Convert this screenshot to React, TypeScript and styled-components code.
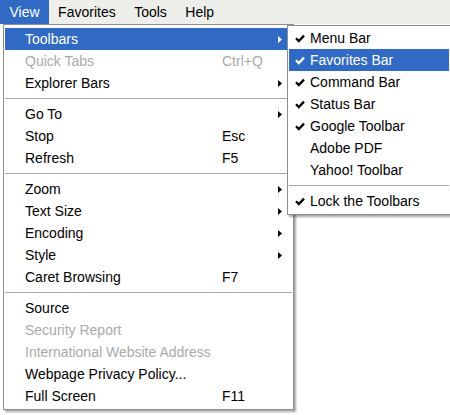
import styled, { createGlobalStyle } from 'styled-components'

const GlobalStyle = createGlobalStyle`
body {
  margin: 0;
  background: #ffffff;
  font-family: "Liberation Sans", Arial, sans-serif;
}
`

type Entry =
  | { sep: true }
  | { label: string; key?: string; sub?: boolean; off?: boolean; hot?: boolean; check?: boolean; sep?: false }

const viewItems: Entry[] = [
  { label: 'Toolbars', sub: true, hot: true },
  { label: 'Quick Tabs', key: 'Ctrl+Q', off: true },
  { label: 'Explorer Bars', sub: true },
  { sep: true },
  { label: 'Go To', sub: true },
  { label: 'Stop', key: 'Esc' },
  { label: 'Refresh', key: 'F5' },
  { sep: true },
  { label: 'Zoom', sub: true },
  { label: 'Text Size', sub: true },
  { label: 'Encoding', sub: true },
  { label: 'Style', sub: true },
  { label: 'Caret Browsing', key: 'F7' },
  { sep: true },
  { label: 'Source' },
  { label: 'Security Report', off: true },
  { label: 'International Website Address', off: true },
  { label: 'Webpage Privacy Policy...' },
  { label: 'Full Screen', key: 'F11' },
]

const toolbarItems: Entry[] = [
  { label: 'Menu Bar', check: true },
  { label: 'Favorites Bar', check: true, hot: true },
  { label: 'Command Bar', check: true },
  { label: 'Status Bar', check: true },
  { label: 'Google Toolbar', check: true },
  { label: 'Adobe PDF' },
  { label: 'Yahoo! Toolbar' },
  { sep: true },
  { label: 'Lock the Toolbars', check: true },
]

const Check = () => (
  <svg width="10" height="9" viewBox="0 0 10 9">
    <path d="M1 4.2 L3.8 7 L9 1.6" fill="none" stroke="currentColor" strokeWidth="2.3" />
  </svg>
)

const Arrow = () => (
  <svg width="4" height="7" viewBox="0 0 4 7">
    <polygon points="0,0 4,3.5 0,7" fill="currentColor" />
  </svg>
)

const App = () => {
  return (
    <Page>
      <GlobalStyle />
      <MenuBar>
        <Title $open>View</Title>
        <Title>Favorites</Title>
        <Title>Tools</Title>
        <Title>Help</Title>
      </MenuBar>

      <Menu>
        {viewItems.map((it, i) =>
          it.sep ? (
            <Sep key={i} />
          ) : (
            <Item key={i} $hot={it.hot} $off={it.off}>
              <span />
              <Label>{it.label}</Label>
              <Key>{it.key}</Key>
              <ArrowCell>{it.sub && <Arrow />}</ArrowCell>
            </Item>
          )
        )}
      </Menu>

      <SubMenu>
        {toolbarItems.map((it, i) =>
          it.sep ? (
            <SubSep key={i} />
          ) : (
            <SubItem key={i} $hot={it.hot}>
              <CheckCell>{it.check && <Check />}</CheckCell>
              <Label>{it.label}</Label>
            </SubItem>
          )
        )}
      </SubMenu>
    </Page>
  )
}

export default App

const Page = styled.div`
position: relative;
width: 450px;
height: 415px;
overflow: hidden;
background: #ffffff;
`

const MenuBar = styled.div`
display: flex;
align-items: stretch;
height: 24px;
background: #eeeeea;
font-size: 14px;
color: #000;
`

const Title = styled.div<{ $open?: boolean }>`
display: flex;
align-items: center;
padding: 0 9px 0 9.5px;
background: ${p => (p.$open ? '#316ac5' : 'transparent')};
color: ${p => (p.$open ? '#ffffff' : '#000000')};
`

const Menu = styled.div`
position: absolute;
left: 3px;
top: 24px;
width: 287px;
padding: 3px 1px 2px;
background: #ffffff;
border: 1px solid #8e8e8e;
box-shadow: 2px 2px 2px rgba(0, 0, 0, 0.35);
font-size: 14px;
`

const Item = styled.div<{ $hot?: boolean; $off?: boolean }>`
display: grid;
grid-template-columns: 20px 197px 1fr 20px;
align-items: center;
height: 22px;
background: ${p => (p.$hot ? '#316ac5' : 'transparent')};
color: ${p => (p.$hot ? '#ffffff' : p.$off ? '#aaaaaa' : '#000000')};
`

const Label = styled.span`
white-space: nowrap;
`

const Key = styled.span`
white-space: nowrap;
`

const ArrowCell = styled.span`
display: flex;
align-items: center;
justify-content: center;
padding-right: 4px;
`

const Sep = styled.div`
height: 1px;
margin: 4px 0 4px 0;
background: #a8a8a8;
`

const SubMenu = styled.div`
position: absolute;
left: 287px;
top: 25px;
width: 160px;
padding: 1px 1px 2px;
background: #ffffff;
border: 1px solid #8e8e8e;
box-shadow: 2px 2px 2px rgba(0, 0, 0, 0.35);
font-size: 14px;
`

const SubItem = styled.div<{ $hot?: boolean }>`
display: grid;
grid-template-columns: 21px 1fr;
align-items: center;
height: 22px;
background: ${p => (p.$hot ? '#316ac5' : 'transparent')};
color: ${p => (p.$hot ? '#ffffff' : '#000000')};
`

const CheckCell = styled.span`
display: flex;
align-items: center;
justify-content: center;
`

const SubSep = styled.div`
height: 1px;
margin: 4px 0 4px;
background: #a8a8a8;
`
